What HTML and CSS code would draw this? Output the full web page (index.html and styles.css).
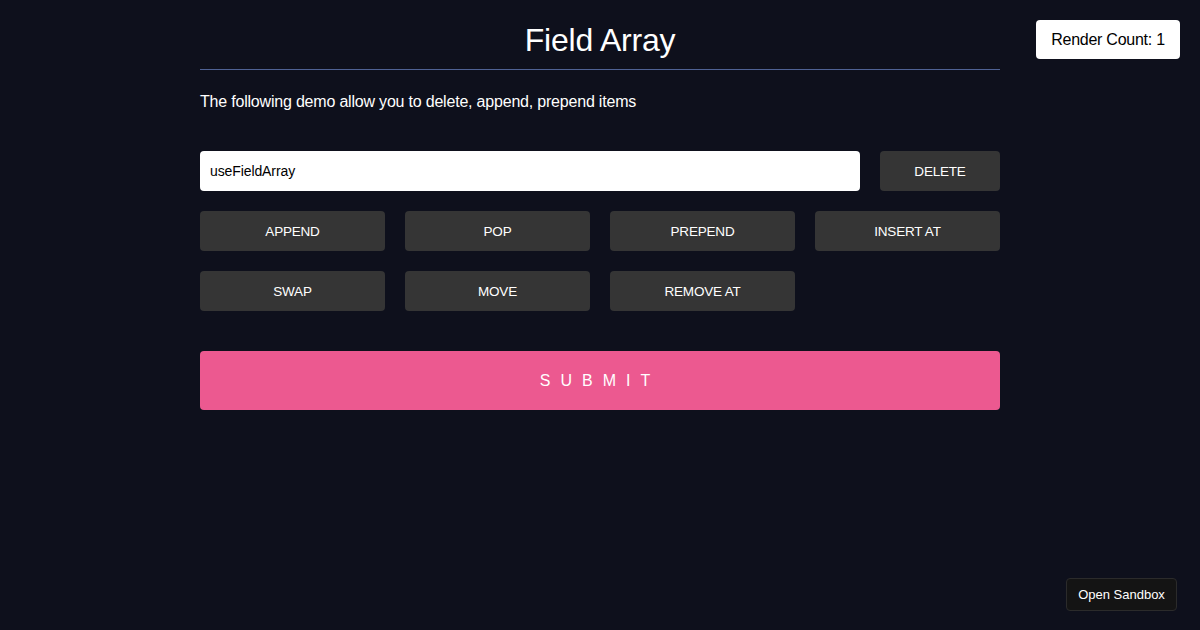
FILE: index.html
```html
<!DOCTYPE html>
<html lang="en">
<head>
    <meta charset="UTF-8">
    <meta name="viewport" content="width=device-width, initial-scale=1.0">
    <title>Field Array</title>
    <link rel="stylesheet" href="styles.css">
</head>
<body>
    <!-- Render counter -->
    <div class="render-count">Render Count: 1</div>

    <form class="demo">
        <h1 class="title">Field Array</h1>
        <p class="intro">The following demo allow you to delete, append, prepend items</p>

        <!-- Field row -->
        <div class="field-row">
            <input class="field-input" type="text" value="useFieldArray">
            <button type="button" class="btn">DELETE</button>
        </div>

        <!-- Actions -->
        <div class="actions">
            <button type="button" class="btn">APPEND</button>
            <button type="button" class="btn">POP</button>
            <button type="button" class="btn">PREPEND</button>
            <button type="button" class="btn">INSERT AT</button>
            <button type="button" class="btn">SWAP</button>
            <button type="button" class="btn">MOVE</button>
            <button type="button" class="btn">REMOVE AT</button>
        </div>

        <button type="submit" class="submit">SUBMIT</button>
    </form>

    <button class="sandbox">Open Sandbox</button>
</body>
</html>
```

FILE: styles.css
```css
* {
    margin: 0;
    padding: 0;
    box-sizing: border-box;
}

body {
    height: 100vh;
    background: #0e101c;
    color: #ffffff;
    font-family: 'Liberation Sans', Arial, sans-serif;
    overflow: hidden;
}

/* Form */
.demo {
    width: 800px;
    margin: 0 auto;
}

.title {
    margin-top: 22px;
    padding-bottom: 10px;
    font-size: 32px;
    line-height: 37px;
    font-weight: 400;
    letter-spacing: -0.2px;
    text-align: center;
    border-bottom: 1px solid rgb(79, 98, 148);
}

.intro {
    margin-top: 22px;
    font-size: 16px;
    line-height: 19px;
    letter-spacing: -0.2px;
}

.field-row {
    display: flex;
    gap: 20px;
    margin-top: 40px;
}

.field-input {
    flex: 1;
    height: 40px;
    padding: 0 10px;
    border: none;
    border-radius: 4px;
    background: #ffffff;
    color: #000000;
    font-family: inherit;
    font-size: 14px;
    letter-spacing: -0.1px;
    outline: none;
}

.field-row .btn {
    width: 120px;
}

.btn {
    height: 40px;
    border: none;
    border-radius: 4px;
    background: #353535;
    color: #ffffff;
    font-family: inherit;
    font-size: 13.5px;
    letter-spacing: -0.2px;
    cursor: pointer;
}

.actions {
    display: grid;
    grid-template-columns: repeat(4, 1fr);
    gap: 20px;
    margin-top: 20px;
}

.submit {
    display: block;
    width: 100%;
    height: 59px;
    margin-top: 40px;
    border: none;
    border-radius: 4px;
    background: #ec5990;
    color: #ffffff;
    font-family: inherit;
    font-size: 16px;
    letter-spacing: 10px;
    cursor: pointer;
}

/* Floating bits */
.render-count {
    position: absolute;
    top: 20px;
    right: 20px;
    width: 144px;
    height: 39px;
    display: flex;
    align-items: center;
    justify-content: center;
    background: #ffffff;
    color: #000000;
    border-radius: 4px;
    font-size: 16px;
    letter-spacing: -0.25px;
}

.sandbox {
    position: absolute;
    right: 23px;
    bottom: 19px;
    width: 111px;
    height: 33px;
    background: #141414;
    border: 1px solid #2b2b2b;
    border-radius: 4px;
    color: #ffffff;
    font-family: inherit;
    font-size: 13px;
}
```
